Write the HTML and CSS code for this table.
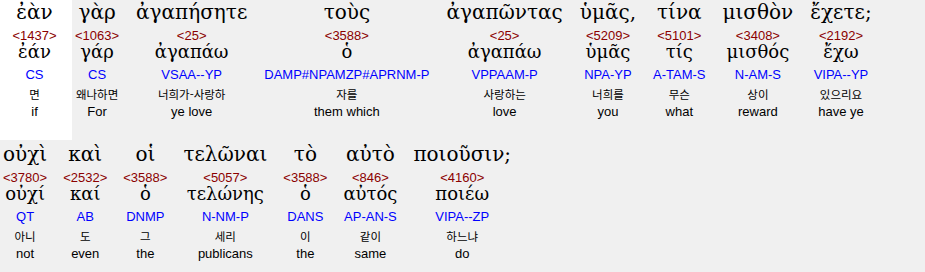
FILE: index.html
```html
<!DOCTYPE html>
<html lang="ko">
<head>
<meta charset="utf-8">
<title>Interlinear</title>
<link rel="stylesheet" href="styles.css">
</head>
<body>
<div class="verse">
  <div class="row">
    <div class="word selected">
      <div class="gk">ἐὰν</div><div class="num">&lt;1437&gt;</div><div class="lemma">ἐάν</div><div class="morph">CS</div><div class="ko">면</div><div class="en">if</div>
    </div>
    <div class="word">
      <div class="gk">γὰρ</div><div class="num">&lt;1063&gt;</div><div class="lemma">γάρ</div><div class="morph">CS</div><div class="ko">왜나하면</div><div class="en">For</div>
    </div>
    <div class="word">
      <div class="gk">ἀγαπήσητε</div><div class="num">&lt;25&gt;</div><div class="lemma">ἀγαπάω</div><div class="morph">VSAA--YP</div><div class="ko">너희가-사랑하</div><div class="en">ye love</div>
    </div>
    <div class="word">
      <div class="gk">τοὺς</div><div class="num">&lt;3588&gt;</div><div class="lemma">ὁ</div><div class="morph">DAMP#NPAMZP#APRNM-P</div><div class="ko">자를</div><div class="en">them which</div>
    </div>
    <div class="word">
      <div class="gk">ἀγαπῶντας</div><div class="num">&lt;25&gt;</div><div class="lemma">ἀγαπάω</div><div class="morph">VPPAAM-P</div><div class="ko">사랑하는</div><div class="en">love</div>
    </div>
    <div class="word">
      <div class="gk">ὑμᾶς,</div><div class="num">&lt;5209&gt;</div><div class="lemma">ὑμᾶς</div><div class="morph">NPA-YP</div><div class="ko">너희를</div><div class="en">you</div>
    </div>
    <div class="word">
      <div class="gk">τίνα</div><div class="num">&lt;5101&gt;</div><div class="lemma">τίς</div><div class="morph">A-TAM-S</div><div class="ko">무슨</div><div class="en">what</div>
    </div>
    <div class="word">
      <div class="gk">μισθὸν</div><div class="num">&lt;3408&gt;</div><div class="lemma">μισθός</div><div class="morph">N-AM-S</div><div class="ko">상이</div><div class="en">reward</div>
    </div>
    <div class="word">
      <div class="gk">ἔχετε;</div><div class="num">&lt;2192&gt;</div><div class="lemma">ἔχω</div><div class="morph">VIPA--YP</div><div class="ko">있으리요</div><div class="en">have ye</div>
    </div>
  </div>
  <div class="row">
    <div class="word">
      <div class="gk">οὐχὶ</div><div class="num">&lt;3780&gt;</div><div class="lemma">οὐχί</div><div class="morph">QT</div><div class="ko">아니</div><div class="en">not</div>
    </div>
    <div class="word">
      <div class="gk">καὶ</div><div class="num">&lt;2532&gt;</div><div class="lemma">καί</div><div class="morph">AB</div><div class="ko">도</div><div class="en">even</div>
    </div>
    <div class="word">
      <div class="gk">οἱ</div><div class="num">&lt;3588&gt;</div><div class="lemma">ὁ</div><div class="morph">DNMP</div><div class="ko">그</div><div class="en">the</div>
    </div>
    <div class="word">
      <div class="gk">τελῶναι</div><div class="num">&lt;5057&gt;</div><div class="lemma">τελώνης</div><div class="morph">N-NM-P</div><div class="ko">세리</div><div class="en">publicans</div>
    </div>
    <div class="word">
      <div class="gk">τὸ</div><div class="num">&lt;3588&gt;</div><div class="lemma">ὁ</div><div class="morph">DANS</div><div class="ko">이</div><div class="en">the</div>
    </div>
    <div class="word">
      <div class="gk">αὐτὸ</div><div class="num">&lt;846&gt;</div><div class="lemma">αὐτός</div><div class="morph">AP-AN-S</div><div class="ko">같이</div><div class="en">same</div>
    </div>
    <div class="word">
      <div class="gk">ποιοῦσιν;</div><div class="num">&lt;4160&gt;</div><div class="lemma">ποιέω</div><div class="morph">VIPA--ZP</div><div class="ko">하느냐</div><div class="en">do</div>
    </div>
  </div>
</div>
</body>
</html>
```

FILE: styles.css
```css
html, body {
  margin: 0;
  padding: 0;
  background: #f0f0f0;
}

.verse {
  display: flex;
  flex-direction: column;
  gap: 2px;
}

.row {
  display: flex;
  flex-wrap: nowrap;
  align-items: flex-start;
}

.word {
  box-sizing: border-box;
  height: 140px;
  padding: 0 13px 0 3px;
  text-align: center;
  white-space: nowrap;
}

.row:first-child .word {
  padding-right: 14px;
}

.word.selected {
  background: #ffffff;
  width: 72px;
  padding: 0 14px 0 11px;
}

.gk {
  font-family: "DejaVu Serif", "Liberation Serif", serif;
  font-size: 20px;
  line-height: 25px;
  color: #000000;
}

.num {
  font-family: "Liberation Sans", Arial, sans-serif;
  font-size: 13px;
  line-height: 15px;
  margin-top: 3px;
  color: #8b0000;
}

.lemma {
  font-family: "DejaVu Serif", "Liberation Serif", serif;
  font-size: 18px;
  line-height: 18px;
  color: #000000;
}

.morph {
  font-family: "Liberation Sans", Arial, sans-serif;
  font-size: 13px;
  line-height: 20px;
  margin-top: 4px;
  color: #0000ff;
}

.ko {
  font-family: "Noto Sans CJK KR", "Noto Sans", sans-serif;
  font-size: 11.5px;
  line-height: 18px;
  color: #000000;
}

.en {
  font-family: "Liberation Sans", Arial, sans-serif;
  font-size: 13px;
  line-height: 18px;
  color: #000000;
}
```
